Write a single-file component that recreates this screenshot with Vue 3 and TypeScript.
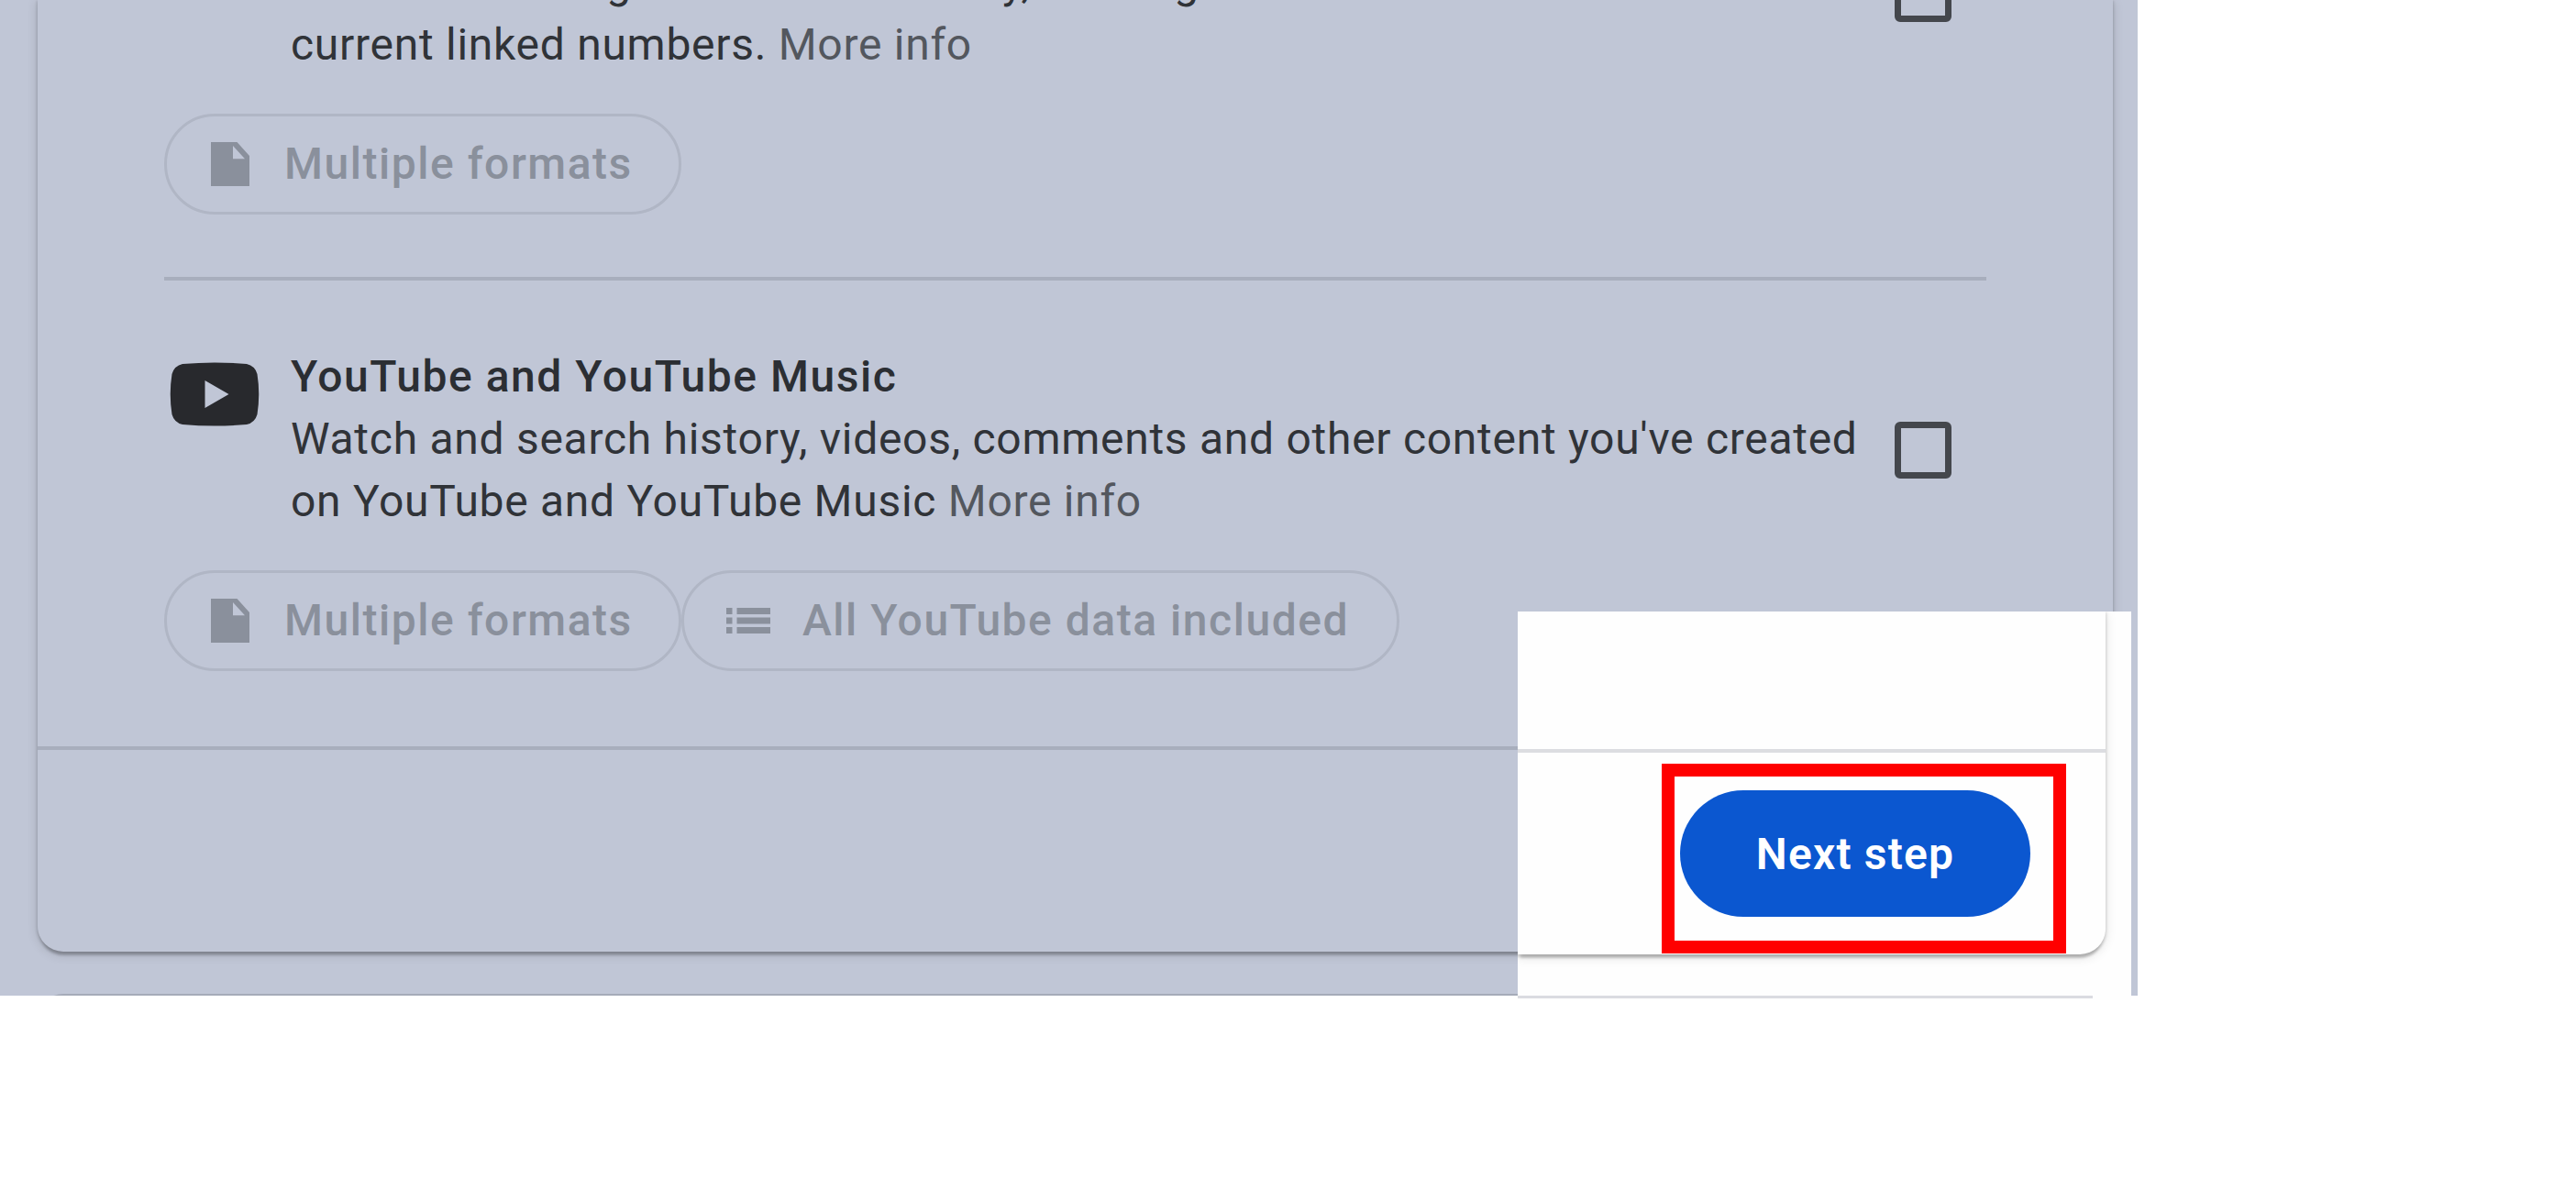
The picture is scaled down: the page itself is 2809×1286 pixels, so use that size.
<script setup lang="ts">
interface Chip {
  icon: 'file' | 'list'
  label: string
}

const voiceChips: Chip[] = [{ icon: 'file', label: 'Multiple formats' }]
const youtubeChips: Chip[] = [
  { icon: 'file', label: 'Multiple formats' },
  { icon: 'list', label: 'All YouTube data included' },
]
</script>

<template>
  <main class="page">
    <div class="panel">
      <section class="card">
        <article class="product first">
          <div class="head">
            <div class="logo"></div>
            <div class="copy">
              <p class="line"><span class="seg-a">Call and message</span><span class="seg-b"> and device history,</span><span> existing</span></p>
              <p class="line">current linked numbers. <a class="more">More info</a></p>
            </div>
            <span class="checkbox"></span>
          </div>
          <div class="chips">
            <div v-for="chip in voiceChips" :key="chip.label" class="chip">
              <svg class="icon-file" viewBox="0 0 42 48">
                <path fill-rule="evenodd" d="M0 0H28.5L42 15V48H0ZM24 4V18.2H37Z" />
              </svg>
              <span class="label">{{ chip.label }}</span>
            </div>
          </div>
        </article>

        <hr class="divider" />

        <article class="product">
          <div class="head">
            <div class="logo">
              <svg class="youtube" viewBox="0 0 98 70">
                <path fill-rule="evenodd" d="M14 2Q49-1 84 2Q93 4 95.500 13Q99 35 95.500 57Q93 66 84 68Q49 71 14 68Q5 66 2.500 57Q-1 35 2.500 13Q5 4 14 2ZM38.500 20V50L64.500 35Z" />
              </svg>
            </div>
            <div class="copy">
              <h3 class="line title">YouTube and YouTube Music</h3>
              <p class="line">Watch and search history, videos, comments and other content you've created</p>
              <p class="line">on YouTube and YouTube Music <a class="more">More info</a></p>
            </div>
            <span class="checkbox"></span>
          </div>
          <div class="chips">
            <div v-for="chip in youtubeChips" :key="chip.label" class="chip" :class="{ wide: chip.icon === 'list' }">
              <svg v-if="chip.icon === 'file'" class="icon-file" viewBox="0 0 42 48">
                <path fill-rule="evenodd" d="M0 0H28.5L42 15V48H0ZM24 4V18.2H37Z" />
              </svg>
              <svg v-else class="icon-list" viewBox="0 0 48 28">
                <path d="M0 0H6.500V7H0ZM0 10.500H6.500V17.500H0ZM0 21H6.500V28H0ZM11.500 0H48V7H11.500ZM11.500 10.500H48V17.500H11.500ZM11.500 21H48V28H11.500Z" />
              </svg>
              <span class="label">{{ chip.label }}</span>
            </div>
          </div>
        </article>

        <footer class="footer"></footer>
      </section>
      <section class="next-card"></section>
    </div>

    <div class="spotlight">
      <div class="lit-card">
        <div class="lit-footer"></div>
      </div>
      <div class="lit-next"></div>
      <div class="marker">
        <button class="next" type="button">Next step</button>
      </div>
    </div>
  </main>
</template>

<style>
body {
  margin: 0;
  background: #fff;
}
</style>

<style scoped>
* {
  box-sizing: border-box;
}

.page {
  position: relative;
  width: 2809px;
  height: 1286px;
  overflow: hidden;
  background: #fff;
  font-family: Roboto, "Liberation Sans", sans-serif;
}

.panel {
  width: 2331px;
  height: 1086px;
  overflow: hidden;
  background: #c0c6d6;
}

.card {
  width: 2263px;
  height: 1038px;
  margin-left: 41px;
  border-radius: 0 0 28px 28px;
  background: #c0c6d6;
  box-shadow:
    0 7px 3px -3px rgba(0, 0, 0, 0.15),
    0 2px 3px 1px rgba(0, 0, 0, 0.14),
    0 3px 12px 1px rgba(0, 0, 0, 0.12);
}

.card::before {
  content: "";
  display: table;
}

.product {
  padding: 71px 0 0 138px;
}

.product.first {
  padding-top: 0;
  margin-top: -53px;
}

.head {
  display: flex;
}

.logo {
  width: 138px;
  padding: 18px 0 0 6px;
}

.youtube {
  display: block;
  width: 98px;
  height: 70px;
  fill: #28292d;
}

.copy {
  width: 1749px;
}

.line {
  margin: 0;
  height: 68px;
  font-size: 48px;
  font-weight: 400;
  line-height: 68px;
  letter-spacing: 0.72px;
  color: #303338;
  white-space: pre;
}

.seg-a {
  letter-spacing: 1.2px;
}

.seg-b {
  letter-spacing: 0.1px;
}

.title {
  font-weight: 500;
  letter-spacing: 1.54px;
  color: #2b2e33;
}

.more {
  color: #53575e;
}

.checkbox {
  width: 62px;
  height: 62px;
  margin-top: 83px;
  border: 7px solid #44474d;
  border-radius: 6px;
}

.first .checkbox {
  margin-top: 15px;
}

.chips {
  display: flex;
  margin-top: 41px;
}

.chip {
  display: flex;
  align-items: center;
  width: 564px;
  height: 110px;
  padding-left: 48px;
  border: 3px solid #b0b6c5;
  border-radius: 55px;
  color: #8a909c;
}

.chip.wide {
  width: 783px;
  padding-left: 46px;
}

.icon-file {
  width: 42px;
  height: 48px;
  margin-right: 38px;
  fill: currentColor;
}

.icon-list {
  width: 48px;
  height: 28px;
  margin-right: 35px;
  fill: currentColor;
}

.label {
  font-size: 48px;
  font-weight: 500;
  line-height: 68px;
  letter-spacing: 1.52px;
  white-space: nowrap;
}

.divider {
  width: 1987px;
  height: 4px;
  margin: 68px 0 0 138px;
  border: 0;
  background: #a8aebd;
}

.footer {
  height: 223px;
  margin-top: 82px;
  border-top: 4px solid #a8aebd;
}

.next-card {
  width: 2263px;
  height: 80px;
  margin: 46px 0 0 41px;
  border-top: 3px solid #a5abb9;
  border-radius: 28px;
}

.spotlight {
  position: absolute;
  top: 667px;
  left: 1655px;
  width: 669px;
  height: 424px;
  overflow: hidden;
  background: #fefefe;
}

.lit-card {
  width: 641px;
  height: 374px;
  padding-top: 150px;
  border-radius: 0 0 28px 0;
  background: #fefefe;
  box-shadow:
    0 7px 3px -3px rgba(0, 0, 0, 0.15),
    0 2px 3px 1px rgba(0, 0, 0, 0.14),
    0 3px 12px 1px rgba(0, 0, 0, 0.1);
}

.lit-footer {
  border-top: 4px solid #dcdde1;
}

.lit-next {
  width: 627px;
  height: 3px;
  margin-top: 45px;
  background: #dadbe1;
}

.marker {
  position: absolute;
  top: 166px;
  left: 157px;
  width: 441px;
  height: 207px;
  padding: 15px 0 0 6px;
  border: 14px solid #f00;
}

.next {
  display: block;
  width: 382px;
  height: 138px;
  padding: 0;
  border: 0;
  border-radius: 69px;
  background: #0b57d0;
  color: #fff;
  font-family: Roboto, "Liberation Sans", sans-serif;
  font-size: 48px;
  font-weight: 600;
  letter-spacing: 1.2px;
}
</style>
